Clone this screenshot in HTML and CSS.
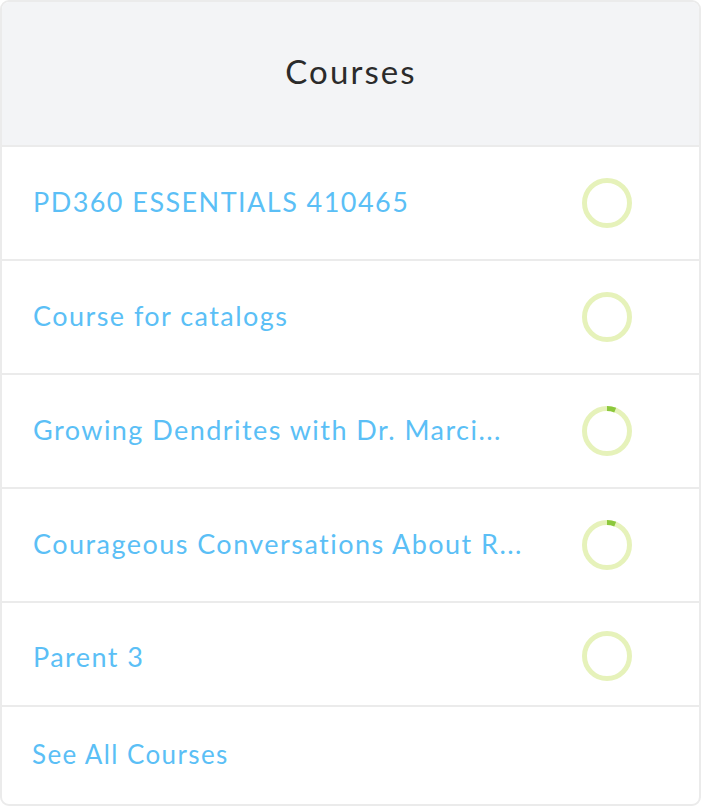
FILE: index.html
```html
<!DOCTYPE html>
<html>
<head>
<meta charset="utf-8">
<link rel="stylesheet" href="styles.css">
</head>
<body>
<div class="card">
  <div class="card-header">Courses</div>
  <ul class="list">
    <li class="row"><span class="title">PD360 ESSENTIALS 410465</span>
      <svg class="ring" width="50" height="50" viewBox="0 0 50 50"><circle cx="25" cy="25" r="22.5" class="track"/></svg></li>
    <li class="row"><span class="title">Course for catalogs</span>
      <svg class="ring" width="50" height="50" viewBox="0 0 50 50"><circle cx="25" cy="25" r="22.5" class="track"/></svg></li>
    <li class="row"><span class="title">Growing Dendrites with Dr. Marci...</span>
      <svg class="ring" width="50" height="50" viewBox="0 0 50 50"><circle cx="25" cy="25" r="22.5" class="track"/><path class="prog" d="M25 2.5 A22.5 22.5 0 0 1 33.2 4.05"/></svg></li>
    <li class="row"><span class="title">Courageous Conversations About R...</span>
      <svg class="ring" width="50" height="50" viewBox="0 0 50 50"><circle cx="25" cy="25" r="22.5" class="track"/><path class="prog" d="M25 2.5 A22.5 22.5 0 0 1 33.2 4.05"/></svg></li>
    <li class="row last"><span class="title">Parent 3</span>
      <svg class="ring" width="50" height="50" viewBox="0 0 50 50"><circle cx="25" cy="25" r="22.5" class="track"/></svg></li>
  </ul>
  <div class="card-footer"><a class="see-all">See All Courses</a></div>
</div>
</body>
</html>
```
FILE: styles.css
```css
* { box-sizing: border-box; }
html, body { margin: 0; padding: 0; background: #fff; }
body { font-family: Lato, "Open Sans", sans-serif; }
.card {
  width: 701px;
  height: 806px;
  border: 2px solid #ebebeb;
  border-radius: 9px;
  overflow: hidden;
  display: flex;
  flex-direction: column;
}
.card-header {
  height: 145px;
  flex-shrink: 0;
  background: #f3f4f6;
  border-bottom: 2px solid #ebebeb;
  display: flex;
  align-items: center;
  justify-content: center;
  padding: 0 0 5px 1px;
  font-size: 33px;
  letter-spacing: 2.1px;
  color: #2b2b2b;
}
.list { list-style: none; margin: 0; padding: 0; }
.row {
  height: 114px;
  border-bottom: 2px solid #ebebeb;
  display: flex;
  align-items: center;
  justify-content: space-between;
  padding: 0 67px 0 31px;
}
.row .title { margin-bottom: 4px; }
.row.last { height: 104px; padding-top: 4px; }
.row.last .title { margin-bottom: 0; }
.title { font-size: 27px; letter-spacing: 1.45px; color: #5bbff6; }
.ring { display: block; }
.track { fill: none; stroke: #e6f2ba; stroke-width: 5; }
.prog { fill: none; stroke: #8cc83c; stroke-width: 5; }
.card-footer {
  flex: 1;
  display: flex;
  align-items: center;
  padding: 0 0 4px 30px;
}
.see-all { font-size: 26px; letter-spacing: 1.4px; color: #5bbff6; }
```
